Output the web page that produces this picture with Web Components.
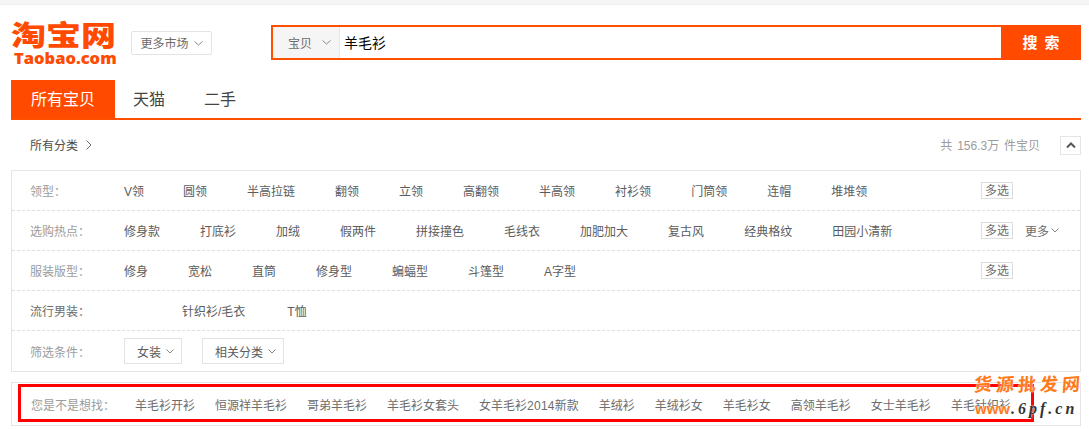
<!DOCTYPE html>
<html lang="zh">
<head>
<meta charset="utf-8">
<title>羊毛衫</title>
<style>
html, body { margin: 0; height: 100%; overflow: hidden; background: #fff; }
body { font: 12px/1 "Liberation Sans", "Noto Sans CJK SC", sans-serif; color: #3c3c3c; }
</style>
</head>
<body>

<tb-page>
  <tb-header slot="header"></tb-header>
  <tb-tabs slot="tabs"></tb-tabs>
  <tb-crumbs slot="crumbs"></tb-crumbs>

  <tb-panel slot="filters">
    <tb-row label="领型：" items="V领,圆领,半高拉链,翻领,立领,高翻领,半高领,衬衫领,门筒领,连帽,堆堆领" multi first-gap="39"></tb-row>
    <tb-row label="选购热点：" items="修身款,打底衫,加绒,假两件,拼接撞色,毛线衣,加肥加大,复古风,经典格纹,田园小清新" multi more></tb-row>
    <tb-row label="服装版型：" items="修身,宽松,直筒,修身型,蝙蝠型,斗篷型,A字型" multi></tb-row>
    <tb-row label="流行男装：" items="针织衫/毛衣,T恤" indent="58" first-gap="42" dark></tb-row>
    <tb-row label="筛选条件：" last>
      <tb-drop>女装</tb-drop>
      <tb-drop>相关分类</tb-drop>
    </tb-row>
  </tb-panel>

  <tb-suggest slot="suggest" items="羊毛衫开衫,恒源祥羊毛衫,哥弟羊毛衫,羊毛衫女套头,女羊毛衫2014新款,羊绒衫,羊绒衫女,羊毛衫女,高领羊毛衫,女士羊毛衫,羊毛针织衫"></tb-suggest>
  <tb-watermark slot="overlay"></tb-watermark>
</tb-page>

<script>
const CHEVRON = (w, h, c) => `<svg width="${w}" height="${h}" viewBox="0 0 ${w} ${h}" fill="none" stroke="${c}"><path d="M.5 .5L${w / 2} ${h - 1}L${w - .5} .5"/></svg>`;

function shell(name, css, html) {
  customElements.define(name, class extends HTMLElement {
    connectedCallback() {
      if (this.shadowRoot) return;
      const root = this.attachShadow({ mode: 'open' });
      root.innerHTML = `<style>${css}</style>` + (typeof html === 'function' ? html(this) : html);
    }
  });
}

shell('tb-page', `
  :host { display: block; width: 1089px; height: 429px; position: relative; overflow: hidden; }
  .top { height: 4px; background: #f5f5f5; border-bottom: 1px solid #eee; }
  .wrap { padding: 0 8px 0 11px; }
`, `
  <div class="top"></div>
  <div class="wrap">
    <slot name="header"></slot>
    <slot name="tabs"></slot>
    <slot name="crumbs"></slot>
    <slot name="filters"></slot>
    <slot name="suggest"></slot>
  </div>
  <slot name="overlay"></slot>
`);

shell('tb-header', `
  :host { display: flex; height: 75px; align-items: flex-start; }
  .logo { width: 120px; padding-top: 13px; color: #ff4a00; }
  .cn { display: block; font: 900 35px/31px "Noto Sans CJK SC", sans-serif; white-space: nowrap; width: 105px; transform: scaleY(.8); transform-origin: 50% 50%; }
  .en { display: block; font: 800 16.500px/16px "Open Sans", sans-serif; margin: 1px 0 0 3px; white-space: nowrap; }
  .market { box-sizing: border-box; margin-top: 26px; width: 81px; height: 24px; border: 1px solid #e3e3e3; border-radius: 2px;
    display: flex; align-items: center; justify-content: center; gap: 5px; color: #6c6c6c; }
  .t { padding-top: 2px; }
  .search { box-sizing: border-box; margin: 20px 0 0 59px; width: 810px; height: 35px; border: 2px solid #ff5000; display: flex; }
  .scope { width: 67px; background: #f5f5f5; border-right: 1px solid #e5e5e5; display: flex; align-items: center; color: #6c6c6c; padding-left: 15px; box-sizing: border-box; gap: 10px; }
  .q { flex: 1; font-size: 14px; color: #000; display: flex; align-items: center; padding-left: 4px; }
  .btn { width: 80px; margin: -2px -2px -2px 0; background: #ff4a00; color: #fff; font-size: 15px; font-weight: 700; display: flex; align-items: center; justify-content: center; gap: 7px; }
`, `
  <div class="logo"><span class="cn">淘宝网</span><span class="en">Taobao.com</span></div>
  <div class="market"><span class="t">更多市场</span>${CHEVRON(9, 5, '#888')}</div>
  <div class="search">
    <div class="scope"><span class="t">宝贝</span>${CHEVRON(9, 5, '#888')}</div>
    <div class="q">羊毛衫</div>
    <div class="btn"><span>搜</span><span>索</span></div>
  </div>
`);

shell('tb-tabs', `
  :host { display: flex; width: 1070px; height: 38px; border-bottom: 2px solid #ff5000; font-size: 16px; color: #444; }
  div { display: flex; align-items: center; justify-content: center; box-sizing: border-box; padding-top: 2px; }
  .on { width: 104px; background: #ff4a00; color: #fff; }
  .t1 { width: 32px; margin-left: 18px; }
  .t2 { width: 32px; margin-left: 39px; }
`, `<div class="on">所有宝贝</div><div class="t1">天猫</div><div class="t2">二手</div>`);

shell('tb-crumbs', `
  :host { display: flex; align-items: center; width: 1070px; height: 50px; padding-left: 19px; box-sizing: border-box; color: #4c4c4c; }
  span { padding-top: 2px; }
  .arrow { margin-left: 8px; }
  .total { margin-left: auto; color: #9c9c9c; word-spacing: 1.500px; }
  .up { box-sizing: border-box; width: 21px; height: 19px; border: 1px solid #e5e5e5; margin-left: 20px; display: flex; align-items: center; justify-content: center; }
`, `
  <span>所有分类</span><svg class="arrow" width="6" height="10" viewBox="0 0 6 10" fill="none" stroke="#6c6c6c"><path d="M.5 .5L5 5L.5 9.500"/></svg>
  <span class="total">共 156.3万 件宝贝</span>
  <div class="up"><svg width="10" height="6" viewBox="0 0 10 6" fill="none" stroke="#555" stroke-width="2"><path d="M1 5.500L5 1.500L9 5.500"/></svg></div>
`);

shell('tb-panel', `
  :host { display: block; box-sizing: border-box; width: 1070px; height: 202px; border: 1px solid #e5e5e5; }
`, `<slot></slot>`);

shell('tb-row', `
  :host { display: flex; align-items: center; box-sizing: border-box; height: 40px; padding-left: 18px; border-bottom: 1px dashed #e0e0e0; position: relative; }
  :host([last]) { border-bottom: 0; }
  .label { width: 94px; flex: none; color: #9c9c9c; padding-top: 2px; }
  :host([dark]) .label { color: #6c6c6c; }
  :host([last]) .label { padding-top: 4px; }
  .items { display: flex; gap: 40px; width: 857px; flex: none; white-space: nowrap; color: #5c5c5c; padding-top: 2px; }
  :host([last]) .items { gap: 20px; padding-top: 0; }
  .multi { box-sizing: border-box; width: 32px; height: 17px; border: 1px solid #ddd; display: flex; align-items: center; justify-content: center; color: #6c6c6c; }
  .more { margin-left: 12px; display: flex; align-items: center; gap: 2px; color: #6c6c6c; }
  .more span { padding-top: 2px; }
`, el => {
  const list = (el.getAttribute('items') || '').split(',').filter(Boolean);
  const firstGap = el.getAttribute('first-gap');
  const items = list.map((t, i) => `<span${i === 0 && firstGap ? ` style="margin-right:${firstGap - 40}px"` : ''}>${t}</span>`).join('');
  const indent = el.getAttribute('indent');
  return `<div class="label">${el.getAttribute('label')}</div>
    <div class="items"${indent ? ` style="padding-left:${indent}px;box-sizing:border-box"` : ''}>${items}<slot></slot></div>
    ${el.hasAttribute('multi') ? '<div class="multi">多选</div>' : ''}
    ${el.hasAttribute('more') ? `<div class="more"><span>更多</span>${CHEVRON(8, 5, '#888')}</div>` : ''}`;
});

shell('tb-drop', `
  :host { display: flex; box-sizing: border-box; height: 26px; padding: 0 7px 0 12px; border: 1px solid #e3e3e3; align-items: center; gap: 5px; color: #5c5c5c; }
  span { padding-top: 3px; }
`, () => `<span><slot></slot></span>${CHEVRON(8, 5, '#888')}`);

shell('tb-suggest', `
  :host { display: flex; align-items: center; box-sizing: border-box; width: 1070px; height: 44px; margin-top: 10px; padding: 3px 0 0 19px; border: 1px solid #e5e5e5; white-space: nowrap; overflow: hidden; color: #6c6c6c; }
  .label { width: 104px; flex: none; color: #9c9c9c; }
  .items { display: flex; gap: 20px; }
  i { font-style: normal; letter-spacing: .25px; }
`, el => `<div class="label">您是不是想找：</div><div class="items">${el.getAttribute('items').split(',').map(t => `<span>${t.replace(/\d+/, '<i>$&</i>')}</span>`).join('')}</div>`);

shell('tb-watermark', `
  :host { position: absolute; left: 0; top: 0; width: 1089px; height: 429px; pointer-events: none; }
  .frame { position: absolute; left: 18px; top: 384px; width: 1016px; height: 38px; box-sizing: border-box; border: 3px solid #f00; }
  .cn { position: absolute; left: 974px; top: 375px; display: flex; gap: 4px; font-size: 18px; line-height: 20px; font-weight: 700; color: #ff7a1a; text-shadow: 0 0 1px #fff, 0 0 2px #fff; }
  .cn span { display: block; transform: skewX(-8deg) rotate(-4deg); }
  .url { position: absolute; left: 975px; top: 399px; display: flex; align-items: baseline; white-space: nowrap; line-height: 20px; color: #333; text-shadow: 0 0 1px #fff, 0 0 2px #fff; }
  .url b { font: 700 15px/20px "Liberation Sans", sans-serif; color: #ff7a1a; margin-right: 1px; }
  .url span { font: italic 700 16px/20px "Liberation Serif", serif; letter-spacing: 3px; }
`, `
  <div class="frame"></div>
  <div class="cn"><span>货</span><span>源</span><span>批</span><span>发</span><span>网</span></div>
  <div class="url"><b>www</b><span>.6pf.cn</span></div>
`);
</script>
</body>
</html>
